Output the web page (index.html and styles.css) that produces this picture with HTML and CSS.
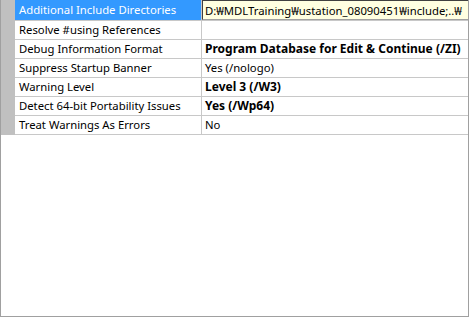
FILE: index.html
```html
<!DOCTYPE html>
<html>
<head>
    <title>Property Grid</title>
    <link rel="stylesheet" href="styles.css">
</head>
<body>
    <div class="sheet">
        <div class="row selected">
            <div class="gutter"></div>
            <div class="name">Additional Include Directories</div>
            <div class="value"><span class="edit">D:&#8361;MDLTraining&#8361;ustation_08090451&#8361;include;..&#8361;</span></div>
        </div>
        <div class="row">
            <div class="gutter"></div>
            <div class="name">Resolve #using References</div>
            <div class="value"></div>
        </div>
        <div class="row">
            <div class="gutter"></div>
            <div class="name">Debug Information Format</div>
            <div class="value bold">Program Database for Edit &amp; Continue (/ZI)</div>
        </div>
        <div class="row">
            <div class="gutter"></div>
            <div class="name">Suppress Startup Banner</div>
            <div class="value">Yes (/nologo)</div>
        </div>
        <div class="row">
            <div class="gutter"></div>
            <div class="name">Warning Level</div>
            <div class="value bold">Level 3 (/W3)</div>
        </div>
        <div class="row">
            <div class="gutter"></div>
            <div class="name">Detect 64-bit Portability Issues</div>
            <div class="value bold">Yes (/Wp64)</div>
        </div>
        <div class="row">
            <div class="gutter"></div>
            <div class="name">Treat Warnings As Errors</div>
            <div class="value">No</div>
        </div>
    </div>
</body>
</html>
```

FILE: styles.css
```css
body { margin: 0; font-family: "Noto Sans", sans-serif; font-size: 11.3px; color: #000; }
.sheet {
    width: 467px;
    height: 316px;
    border: 1px solid #a0a0a0;
    border-top: none;
    background: #fff;
    overflow: hidden;
}
.row {
    display: grid;
    grid-template-columns: 14px 186px 1px 1fr;
    height: 19px;
}
.row.selected { height: 21px; }
.gutter { background: #c0c0c0; }
.name {
    grid-column: 2 / 4;
    padding-left: 4px;
    line-height: 18px;
    white-space: nowrap;
    border-bottom: 1px solid #c8c8c8;
    border-right: 1px solid #c8c8c8;
}
.value {
    padding-left: 3px;
    line-height: 18px;
    white-space: nowrap;
    overflow: hidden;
    border-bottom: 1px solid #c8c8c8;
}
.bold { font-weight: bold; font-size: 12px; }
.selected .name {
    background: #3399ff;
    color: #fff;
    line-height: 20px;
}
.selected .value { padding-left: 0; }
.edit {
    display: block;
    height: 20px;
    line-height: 19px;
    padding-left: 2px;
    background: #ffffe1;
    border: 1px solid #404040;
    border-right: none;
    border-bottom-color: #a0a0a0;
    box-sizing: border-box;
}
```
